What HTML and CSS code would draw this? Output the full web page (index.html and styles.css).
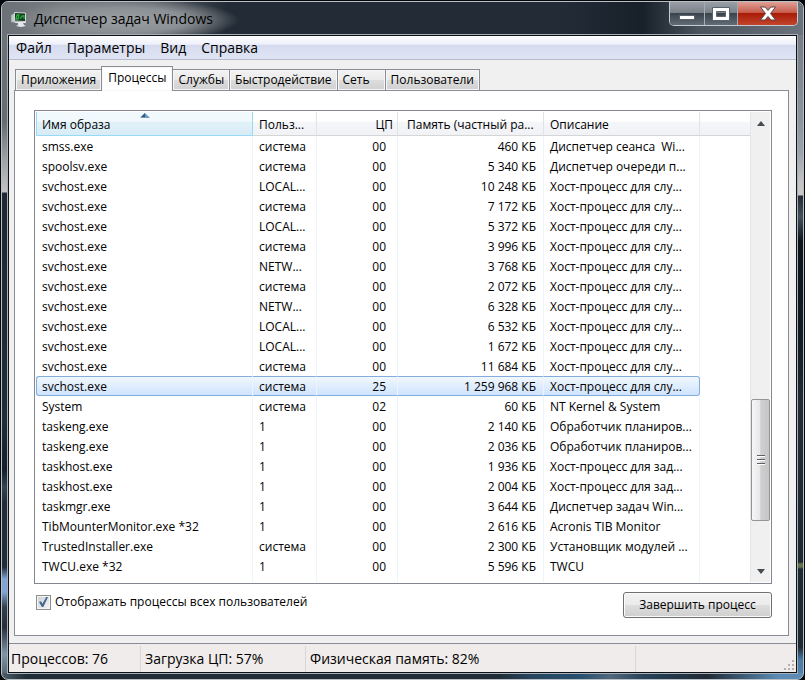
FILE: index.html
```
<!DOCTYPE html>
<html lang="ru">
<head>
<meta charset="utf-8">
<title>Диспетчер задач Windows</title>
<link rel="stylesheet" href="styles.css">
</head>
<body>
<div class="window">
  <header class="titlebar">
    <svg class="app-icon" viewBox="0 0 16 16" aria-hidden="true">
      <path d="M0 4l4-2v10l-4-1z" fill="#c3c9cb" stroke="#7c8588" stroke-width=".6"/>
      <path d="M3.500 1.500l11 .5v8.500l-11-.5z" fill="#123a1d" stroke="#d3d9d9"/>
      <path d="M5 8l1-4 2 0-1 4zM9 8l2-3 2 0v3" fill="none" stroke="#2cac42" stroke-width="1.300"/>
      <path d="M4 11h11v1H4zM7 12h5l1 2 2 1-5 1-5-1 2-1z" fill="#e4e8ea"/>
    </svg>
    <h1 class="title">Диспетчер задач Windows</h1>
    <div class="caption-buttons">
      <button class="caption minimize" aria-label="Свернуть"><svg width="18" height="14" viewBox="0 0 18 14"><rect x="1.500" y="8.500" width="15" height="4" fill="#fff" stroke="#59636d"/></svg></button>
      <button class="caption maximize" aria-label="Развернуть"><svg width="18" height="14" viewBox="0 0 18 14"><path fill-rule="evenodd" d="M.5.500h17v13H.5zM4.500 4.500h9v5h-9z" fill="#fff" stroke="#59636d"/></svg></button>
      <button class="caption close" aria-label="Закрыть"><svg width="18" height="15" viewBox="0 0 18 15"><path d="M1.500 1h4.500l3 3.500L12 1h4.500l-5 6.500 5 6.500H12L9 10.500 6 14H1.500l5-6.500z" fill="#fff" stroke="#574a50"/></svg></button>
    </div>
  </header>
  <div class="client">
    <nav class="menu">
      <button>Файл</button><button>Параметры</button><button>Вид</button><button>Справка</button>
    </nav>
    <main class="content">
      <div class="tabs" role="tablist">
        <button class="tab" role="tab">Приложения</button>
        <button class="tab active" role="tab" aria-selected="true">Процессы</button>
        <button class="tab" role="tab">Службы</button>
        <button class="tab" role="tab">Быстродействие</button>
        <button class="tab short" role="tab">Сеть</button>
        <button class="tab" role="tab">Пользователи</button>
      </div>
      <section class="page">
        <div class="list">
          <div class="rows">
          <table>
            <colgroup><col class="c-name"><col class="c-user"><col class="c-cpu"><col class="c-mem"><col class="c-desc"><col></colgroup>
            <thead><tr><th class="sorted">Имя образа<svg class="sort" width="10" height="5" viewBox="0 0 10 5"><path d="M0 5l5-5 5 5z" fill="#6f9cbc"/><path d="M1 4l4-4v4z" fill="#2f587c"/></svg></th><th>Польз...</th><th class="num">ЦП</th><th class="memory">Память (частный ра...</th><th>Описание</th><th></th></tr></thead>
            <tbody>
            <tr><td>smss.exe</td><td>система</td><td>00</td><td>460 КБ</td><td>Диспетчер сеанса &nbsp;Wi...</td><td></td></tr>
            <tr><td>spoolsv.exe</td><td>система</td><td>00</td><td>5 340 КБ</td><td>Диспетчер очереди п...</td><td></td></tr>
            <tr><td>svchost.exe</td><td>LOCAL...</td><td>00</td><td>10 248 КБ</td><td>Хост-процесс для слу...</td><td></td></tr>
            <tr><td>svchost.exe</td><td>система</td><td>00</td><td>7 172 КБ</td><td>Хост-процесс для слу...</td><td></td></tr>
            <tr><td>svchost.exe</td><td>LOCAL...</td><td>00</td><td>5 372 КБ</td><td>Хост-процесс для слу...</td><td></td></tr>
            <tr><td>svchost.exe</td><td>система</td><td>00</td><td>3 996 КБ</td><td>Хост-процесс для слу...</td><td></td></tr>
            <tr><td>svchost.exe</td><td>NETW...</td><td>00</td><td>3 768 КБ</td><td>Хост-процесс для слу...</td><td></td></tr>
            <tr><td>svchost.exe</td><td>система</td><td>00</td><td>2 072 КБ</td><td>Хост-процесс для слу...</td><td></td></tr>
            <tr><td>svchost.exe</td><td>NETW...</td><td>00</td><td>6 328 КБ</td><td>Хост-процесс для слу...</td><td></td></tr>
            <tr><td>svchost.exe</td><td>LOCAL...</td><td>00</td><td>6 532 КБ</td><td>Хост-процесс для слу...</td><td></td></tr>
            <tr><td>svchost.exe</td><td>LOCAL...</td><td>00</td><td>1 672 КБ</td><td>Хост-процесс для слу...</td><td></td></tr>
            <tr><td>svchost.exe</td><td>система</td><td>00</td><td>11 684 КБ</td><td>Хост-процесс для слу...</td><td></td></tr>
            <tr class="selected"><td>svchost.exe</td><td>система</td><td>25</td><td>1 259 968 КБ</td><td>Хост-процесс для слу...</td><td></td></tr>
            <tr><td>System</td><td>система</td><td>02</td><td>60 КБ</td><td>NT Kernel &amp; System</td><td></td></tr>
            <tr><td>taskeng.exe</td><td>1</td><td>00</td><td>2 140 КБ</td><td>Обработчик планиров...</td><td></td></tr>
            <tr><td>taskeng.exe</td><td>1</td><td>00</td><td>2 036 КБ</td><td>Обработчик планиров...</td><td></td></tr>
            <tr><td>taskhost.exe</td><td>1</td><td>00</td><td>1 936 КБ</td><td>Хост-процесс для зад...</td><td></td></tr>
            <tr><td>taskhost.exe</td><td>1</td><td>00</td><td>2 004 КБ</td><td>Хост-процесс для зад...</td><td></td></tr>
            <tr><td>taskmgr.exe</td><td>1</td><td>00</td><td>3 644 КБ</td><td>Диспетчер задач Win...</td><td></td></tr>
            <tr><td>TibMounterMonitor.exe *32</td><td>1</td><td>00</td><td>2 616 КБ</td><td>Acronis TIB Monitor</td><td></td></tr>
            <tr><td>TrustedInstaller.exe</td><td>система</td><td>00</td><td>2 300 КБ</td><td>Установщик модулей ...</td><td></td></tr>
            <tr><td>TWCU.exe *32</td><td>1</td><td>00</td><td>5 596 КБ</td><td>TWCU</td><td></td></tr>
            <tr><td></td><td></td><td></td><td></td><td></td><td></td></tr>
            </tbody>
          </table>
          </div>
          <div class="scrollbar">
            <button class="arrow" aria-label="Вверх"><svg width="8" height="5" viewBox="0 0 8 5"><path d="M0 5l4-5 4 5z" fill="#454b50"/></svg></button>
            <div class="track"><div class="thumb"><i></i><i></i><i></i></div></div>
            <button class="arrow" aria-label="Вниз"><svg width="8" height="5" viewBox="0 0 8 5"><path d="M0 0l4 5 4-5z" fill="#454b50"/></svg></button>
          </div>
        </div>
        <div class="actions">
          <label class="check"><input type="checkbox" checked>Отображать процессы всех пользователей</label>
          <button class="end">Завершить процесс</button>
        </div>
      </section>
    </main>
    <footer class="status">
      <span class="s-count">Процессов: 76</span><span class="s-cpu">Загрузка ЦП: 57%</span><span class="s-mem">Физическая память: 82%</span>
      <svg class="grip" width="11" height="11" viewBox="0 0 11 11"><path d="M8 0h2v2H8zM4 4h2v2H4zM8 4h2v2H8zM0 8h2v2H0zM4 8h2v2H4zM8 8h2v2H8z" fill="#b3b0b0"/></svg>
    </footer>
  </div>
</div>
</body>
</html>
```
FILE: styles.css
```
* { box-sizing: border-box; }
html, body { height: 100%; }
body { margin: 0; padding: 1px 1px 0; background: #05080b; color: #000; font: 12px/20px "Open Sans", "Noto Sans", sans-serif; }
button { font: inherit; color: inherit; padding: 0; border: 0; background: none; }
.window {
  height: 100%; display: flex; flex-direction: column; padding: 0 6px 6px;
  border: 1px solid #b9bfc5; border-radius: 7px;
  background:
    linear-gradient(90deg, #4d5d6a 0, #202c36 3%, #202c36 62%, #27455d 66%, #25506f 72%, #52687c 76%, #27435a 80%, #1f2a35 88%, #5c8cb5 97%) bottom / 100% 6px no-repeat,
    linear-gradient(#6e757c 0, #8d959c 120px, #9aa3ac 150px, #c3c3c4 180px, #c9c9c9 193px, #232b35 194px, #45505d 215px, #0d151b 240px, #131d24 340px, #232c36 400px, #202a33 560px, #667249 562px, #667249 565px, #202a33 567px, #202a33 645px, #4b7ba6 658px, #5783b3 100%) right / 20px 100% no-repeat,
    linear-gradient(#70767a 0, #656d73 120px, #a1a5a7 160px, #c2c2c2 190px, #1d2831 191px, #202c36 420px, #131e28 468px, #354450 485px, #222d38 500px, #202c36 565px, #7ea5d6 577px, #7ea5d6 590px, #33404d 605px, #252e39 625px, #7f96a8 652px, #4d5d6a 100%);
}
.titlebar {
  height: 33px; flex: none; display: flex; align-items: center; margin: 0 -6px; padding-left: 9px; border-radius: 6px 6px 0 0;
  background:
    radial-gradient(ellipse 115px 22px at 122px 18px, #9ba0a4 0, #8b9094 55%, rgba(120, 126, 132, 0) 100%),
    linear-gradient(90deg, #6c7177 0, #767b80 60px, #5a6168 150px, #232c36 225px, #232c36 70%, #18212a 80%, #4b545e 87%, #6b737c 100%);
}
.app-icon { width: 16px; height: 16px; flex: none; }
.title { margin: 0 auto 0 7px; font: 14px/24px "Open Sans", "Noto Sans", sans-serif; }
.caption-buttons { display: flex; align-self: flex-start; margin-right: 5px; border: 1px solid #c4cad0; border-top: 0; border-radius: 0 0 5px 5px; overflow: hidden; }
.caption { height: 23px; display: grid; place-items: center; border-right: 1px solid #a5acb4; background: linear-gradient(#9a9fa5 0, #7a8289 46%, #3b434c 50%, #626c76 100%); }
.minimize { width: 35px; }
.maximize { width: 33px; }
.close { width: 59px; border-right: 0; background: linear-gradient(#dfa096 0, #c75c4c 46%, #a91c08 50%, #c2452b 100%); }
.client { flex: 1; min-height: 0; display: flex; flex-direction: column; background: #f0f0f0; border: 1px solid #0b1016; outline: 1px solid #a9afb6; }
.menu { height: 24px; flex: none; display: flex; gap: 15px; padding: 0 7px; font: 14px/24px "Open Sans", "Noto Sans", sans-serif; border-bottom: 1px solid #b6bccc; background: linear-gradient(#fff 0, #eef0fa 36%, #d5dbee 40%, #e0e5f5 100%); }
.content { flex: 1; min-height: 0; display: flex; flex-direction: column; padding: 6px 7px 7px 5px; }
.tabs { height: 25px; flex: none; display: flex; align-items: flex-end; padding-left: 1px; margin-bottom: -1px; z-index: 1; }
.tab { height: 22px; padding: 0 5px; border: 1px solid #898c95; margin-right: -1px; box-shadow: inset 0 0 0 1px #f7f7f7; background: linear-gradient(#f2f2f2 0, #ebebeb 48%, #dcdcdc 52%, #d0d0d0 100%); line-height: 20px; }
.tab.active { height: 25px; padding: 0 6px 3px; background: #fff; border-bottom: 0; }
.tab.short { padding-right: 15px; }
.page { flex: 1; min-height: 0; display: flex; flex-direction: column; padding: 19px 16px 17px 19px; background: #fff; border: 1px solid #898c95; }
.list { flex: 1; min-height: 0; display: flex; padding: 1px; border: 1px solid #828790; }
.rows { flex: 1; min-width: 0; overflow: hidden; }
table { width: 100%; table-layout: fixed; border-collapse: separate; border-spacing: 0; }
.c-name { width: 217px; } .c-user { width: 64px; } .c-cpu { width: 81px; } .c-mem { width: 146px; } .c-desc { width: 156px; }
th { height: 24px; padding: 3px 6px 0; text-align: left; font-weight: normal; line-height: 20px; white-space: nowrap; border-right: 1px solid #e1e3e6; border-bottom: 1px solid #d5d5d5; background: linear-gradient(#fff 0, #fff 40%, #f5f6f9 44%, #f1f2f5 100%); }
th:last-child, td:last-child { border-right: 0; }
th.num { text-align: right; padding-right: 4px; }
th.sorted { position: relative; padding-left: 5px; border: 1px solid #96d9f9; border-top: 0; background: linear-gradient(#f2f9fc 0, #f2f9fc 40%, #e1f1f8 44%, #d8ecf6 100%); }
th.memory { padding-left: 9px; padding-right: 0; }
.sort { position: absolute; top: 1px; left: 50%; margin-left: -5px; }
td { height: 20px; padding: 2px 6px 0; line-height: 18px; white-space: nowrap; border-right: 1px solid #edf4fd; }
td:nth-child(3) { text-align: right; padding-right: 11px; }
td:nth-child(4) { text-align: right; padding-right: 7px; }
.selected td:not(:last-child) { padding-top: 1px; border-top: 1px solid #84acdd; border-bottom: 1px solid #84acdd; line-height: 17px; background: linear-gradient(#f1f7fe, #cfe4fe); }
.selected td:first-child { border-left: 1px solid #84acdd; border-radius: 3px 0 0 3px; padding-left: 5px; }
.selected td:nth-child(5) { border-right-color: #84acdd; border-radius: 0 3px 3px 0; }
.scrollbar { width: 20px; display: flex; flex-direction: column; background: #f0f0f0; border-left: 1px solid #e5e5e5; }
.arrow { height: 22px; display: grid; place-items: center; }
.track { flex: 1; display: flex; flex-direction: column; justify-content: flex-end; padding-bottom: 39px; }
.thumb { height: 122px; display: flex; flex-direction: column; justify-content: center; align-items: center; gap: 2px; border: 1px solid #959595; border-radius: 2px; background: linear-gradient(90deg, #f6f6f6, #e8e8e8 45%, #cfcfd1 52%, #c5c5c8); }
.thumb i { width: 8px; height: 2px; background: #5d6063; border-bottom: 1px solid #fff; }
.actions { flex: none; display: flex; justify-content: space-between; align-items: flex-start; padding-top: 8px; }
.check { display: flex; align-items: center; gap: 4px; margin-left: 2px; }
.check input { appearance: none; width: 15px; height: 15px; margin: 0; border: 1px solid #8e8f8f; box-shadow: inset 0 0 0 1px #f4f4f4; background: linear-gradient(135deg, #cbcfd5, #f6f6f6); display: grid; place-items: center; }
.check input::before { content: ""; width: 9px; height: 10px; background: #44678f; clip-path: polygon(0 50%, 22% 42%, 38% 68%, 80% 0, 100% 0, 48% 100%, 32% 100%); }
.end { width: 149px; height: 26px; border: 1px solid #707070; border-radius: 3px; box-shadow: inset 0 0 0 1px #fbfbfb; background: linear-gradient(#f2f2f2, #ebebeb 48%, #dddddd 52%, #cfcfcf); }
.status { height: 29px; flex: none; display: flex; position: relative; padding-top: 2px; border-top: 1px solid #898c95; background: #f0eceb; font: 14px/26px "Open Sans", "Noto Sans", sans-serif; }
.status span { padding-left: 2px; border-right: 1px solid #d7d7d7; }
.status .s-cpu, .status .s-mem { padding-left: 4px; }
.s-count { width: 132px; } .s-cpu { width: 165px; } .s-mem { width: 330px; }
.grip { position: absolute; right: 1px; bottom: 1px; }
```
